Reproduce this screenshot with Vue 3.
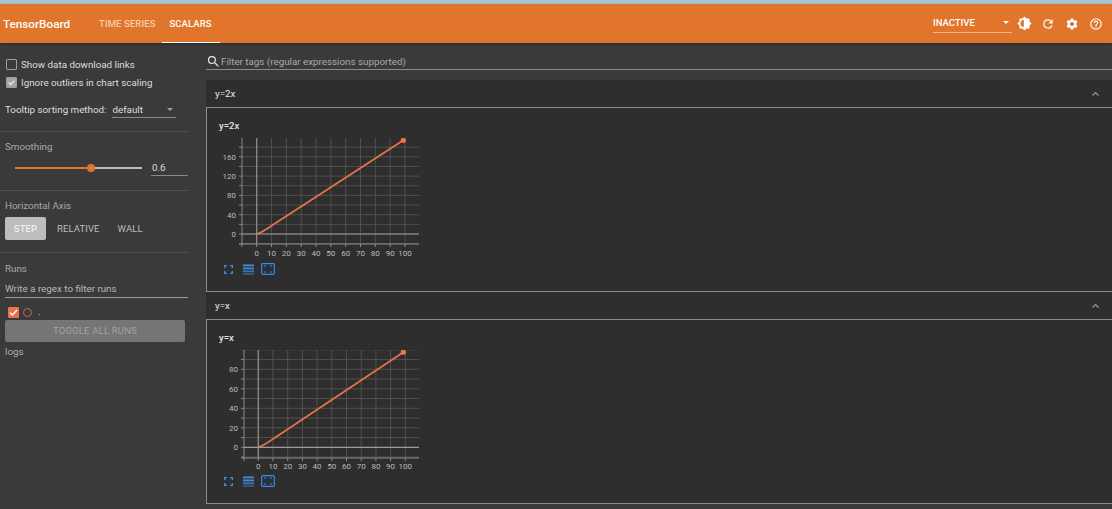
<script setup>
const nav = ['TIME SERIES', 'SCALARS']
function range(a, b, s) { const o = []; for (let v = a; v <= b; v += s) o.push(v); return o }
const xs = range(0, 100, 10)
const charts = [
  { tag: 'y=2x', head: 'y=2x', left: 37, right: 214, top: 0, bottom: 106, x0: 51.7, x100: 200, y0: 96, yStep: 0.4825, yMax: 180, yMin: -20, ticks: [0, 40, 80, 120, 160], end: [198.3, 2.3], lab: 12 },
  { tag: 'y=x', head: 'y=x', left: 39, right: 214, top: 0, bottom: 108, x0: 53.3, x100: 200.3, y0: 97.3, yStep: 0.975, yMax: 90, yMin: -10, ticks: [0, 20, 40, 60, 80], end: [198.3, 2.2], lab: 11 }
]
function px(c, v) { return c.x0 + (c.x100 - c.x0) * v / 100 }
function py(c, v) { return c.y0 - c.yStep * v }
function minors(c) { const s = c.ticks[1] / 2; return range(c.yMin, c.yMax + s, s).filter(v => py(c, v) >= c.top - 1) }
function line(c) { const t = c.y0 - c.end[1]; return `M${px(c, 0)} ${c.y0} Q${px(c, 4)} ${c.y0 - 0.02 * t} ${px(c, 10)} ${c.y0 - 0.088 * t} L${c.end[0]} ${c.end[1]}` }
</script>

<template>
  <div class="page">
    <div class="strip"></div>
    <header class="toolbar">
      <span class="brand">TensorBoard</span>
      <nav class="tabs">
        <span v-for="(n, i) in nav" :key="n" class="tab" :class="{ active: i === 1 }">{{ n }}</span>
      </nav>
      <div class="tools">
        <div class="inactive"><span>INACTIVE</span><i class="caret white"></i></div>
        <svg class="ticon theme" viewBox="0 0 24 24"><path fill="#fff" d="M20 8.690V4h-4.690L12 .69 8.690 4H4v4.690L.69 12 4 15.310V20h4.690L12 23.310 15.310 20H20v-4.690L23.310 12z"/><path fill="#e0752b" d="M11 6.500a5.500 5.500 0 0 0 0 11z"/></svg>
        <svg class="ticon" viewBox="0 0 24 24"><path fill="#fff" d="M17.650 6.350A7.960 7.960 0 0 0 12 4a8 8 0 1 0 7.730 10h-2.080A6 6 0 1 1 12 6c1.660 0 3.140.69 4.220 1.780L13 11h7V4l-2.350 2.350z"/></svg>
        <svg class="ticon" viewBox="0 0 24 24"><path fill="#fff" d="M19.140 12.940c.04-.3.06-.61.06-.94 0-.32-.02-.64-.07-.94l2.030-1.580a.49.49 0 0 0 .12-.61l-1.920-3.320a.49.49 0 0 0-.59-.22l-2.390.96a7 7 0 0 0-1.620-.94l-.36-2.540a.48.48 0 0 0-.48-.41h-3.840a.47.47 0 0 0-.47.41l-.36 2.540c-.59.24-1.130.57-1.620.94l-2.390-.96a.49.49 0 0 0-.59.22L2.740 8.870a.47.47 0 0 0 .12.61l2.030 1.580c-.05.3-.09.63-.09.94s.02.64.07.94l-2.030 1.580a.49.49 0 0 0-.12.61l1.920 3.320c.12.22.37.29.59.22l2.390-.96c.5.38 1.030.7 1.620.94l.36 2.540c.05.24.24.41.48.41h3.840c.24 0 .44-.17.47-.41l.36-2.540a7 7 0 0 0 1.620-.94l2.390.96c.22.08.47 0 .59-.22l1.920-3.320a.47.47 0 0 0-.12-.61l-2.010-1.580zM12 15.600a3.600 3.600 0 1 1 0-7.200 3.600 3.600 0 0 1 0 7.200z"/></svg>
        <svg class="ticon" viewBox="0 0 24 24"><path fill="#fff" d="M11 18h2v-2h-2v2zm1-16a10 10 0 1 0 0 20 10 10 0 0 0 0-20zm0 18a8 8 0 1 1 0-16 8 8 0 0 1 0 16zm0-14a4 4 0 0 0-4 4h2a2 2 0 1 1 4 0c0 2-3 1.750-3 5h2c0-2.250 3-2.500 3-5a4 4 0 0 0-4-4z"/></svg>
      </div>
    </header>

    <div class="body">
      <aside class="side">
        <section class="sec first">
          <label class="check"><span class="box"></span>Show data download links</label>
          <label class="check"><span class="box on"><svg viewBox="0 0 12 12"><path d="M2.200 6.200l2.600 2.600 5-5.400" fill="none" stroke="#eeeeee" stroke-width="1.600"/></svg></span>Ignore outliers in chart scaling</label>
          <div class="sort">
            <span>Tooltip sorting method:</span>
            <div class="select"><span>default</span><i class="caret"></i></div>
          </div>
        </section>
        <section class="sec smooth">
          <h4>Smoothing</h4>
          <div class="sliderrow">
            <div class="slider"><i class="fill"></i><i class="thumb"></i></div>
            <div class="val">0.6</div>
          </div>
        </section>
        <section class="sec axis">
          <h4>Horizontal Axis</h4>
          <div class="btns">
            <span class="btn sel">STEP</span><span class="btn">RELATIVE</span><span class="btn">WALL</span>
          </div>
        </section>
        <section class="sec runs">
          <h4>Runs</h4>
          <div class="regex">Write a regex to filter runs</div>
          <div class="runrow">
            <span class="runbox"><svg viewBox="0 0 12 12"><path d="M2.200 6.200l2.600 2.600 5-5.400" fill="none" stroke="#fff" stroke-width="1.600"/></svg></span>
            <span class="circle"></span><span class="dot">.</span>
          </div>
          <div class="toggle">TOGGLE ALL RUNS</div>
          <div class="logs">logs</div>
        </section>
      </aside>

      <main class="main">
        <div class="filter">
          <svg class="search" viewBox="0 0 24 24"><path fill="#e6e6e6" d="M15.500 14h-.79l-.28-.27A6.470 6.470 0 0 0 16 9.500 6.500 6.500 0 1 0 9.500 16c1.610 0 3.090-.59 4.230-1.570l.27.28v.79l5 4.990L20.490 19l-4.990-5zm-6 0a4.500 4.500 0 1 1 0-9 4.500 4.500 0 0 1 0 9z"/></svg>
          <span>Filter tags (regular expressions supported)</span>
        </div>
        <section v-for="c in charts" :key="c.tag" class="group">
          <div class="ghead">
            <span>{{ c.tag }}</span>
            <svg class="chev" viewBox="0 0 12 8"><path d="M2 6l4-4 4 4" fill="none" stroke="#9a9a9a" stroke-width="1.500"/></svg>
          </div>
          <div class="card">
            <div class="ctitle">{{ c.head }}</div>
            <svg class="plot" width="214" height="125" viewBox="0 0 214 125">
              <g stroke="#505050" stroke-width="1">
                <line v-for="v in xs" :key="'gx' + v" :x1="px(c, v)" :y1="c.top" :x2="px(c, v)" :y2="c.bottom" />
                <line v-for="v in minors(c)" :key="'gy' + v" :x1="c.left" :y1="py(c, v)" :x2="c.right" :y2="py(c, v)" />
              </g>
              <line :x1="c.left" :y1="c.top" :x2="c.left" :y2="c.bottom + 3" stroke="#8a8a8a" />
              <line :x1="c.left - 3" :y1="c.bottom" :x2="c.right" :y2="c.bottom" stroke="#8a8a8a" />
              <line :x1="c.x0" :y1="c.top" :x2="c.x0" :y2="c.bottom" stroke="#8e8e8e" stroke-width="1.200" />
              <line :x1="c.left" :y1="c.y0" :x2="c.right" :y2="c.y0" stroke="#9a9a9a" stroke-width="1.200" />
              <g stroke="#8a8a8a">
                <line v-for="v in xs" :key="'tx' + v" :x1="px(c, v)" :y1="c.bottom" :x2="px(c, v)" :y2="c.bottom + 3" />
                <line v-for="v in minors(c)" :key="'ty' + v" :x1="c.left - 3" :y1="py(c, v)" :x2="c.left" :y2="py(c, v)" />
              </g>
              <g class="axis-text">
                <text v-for="v in xs" :key="'lx' + v" :x="px(c, v)" :y="c.bottom + c.lab" text-anchor="middle">{{ v }}</text>
                <text v-for="v in c.ticks" :key="'ly' + v" :x="c.left - 6" :y="py(c, v) + 3" text-anchor="end">{{ v }}</text>
              </g>
              <path :d="line(c)" fill="none" stroke="#e8744a" stroke-width="1.700" />
              <circle :cx="c.end[0]" :cy="c.end[1]" r="2.600" fill="#f0734a" />
            </svg>
            <div class="icons">
              <svg width="9" height="9" viewBox="0 0 11 11"><path d="M.8 3.600V.8h2.800M7.400.8h2.800v2.800M10.200 7.400v2.800H7.400M3.600 10.200H.8V7.400" fill="none" stroke="#3f8be0" stroke-width="1.700"/></svg>
              <svg width="11" height="11" viewBox="0 0 12 12"><g fill="#3f8be0"><rect y="0.500" width="12" height="2"/><rect y="3.800" width="12" height="2"/><rect y="7" width="12" height="2" opacity=".75"/><rect y="10" width="12" height="1.800" opacity=".5"/></g></svg>
              <svg width="14" height="12" viewBox="0 0 14 12"><rect x=".7" y=".7" width="12.600" height="10.600" rx="1" fill="#262f3a" stroke="#3f8be0" stroke-width="1.200"/><path d="M3 3h2M9 3h2M3 9h2M9 9h2" stroke="#3f8be0" stroke-width="1"/></svg>
            </div>
          </div>
        </section>
      </main>
    </div>
  </div>
</template>

<style>
html, body { margin: 0; background: #3a3a3a; overflow: hidden; }
</style>

<style scoped>
.page { width: 1112px; height: 509px; overflow: hidden; background: #3a3a3a; font-family: Roboto, "Liberation Sans", sans-serif; color: #dcdcdc; font-size: 9.8px; display: flex; flex-direction: column; opacity: .999; }
.strip { height: 4px; background: #a9c4d8; flex: none; }
.toolbar { height: 39px; flex: none; background: #e0752b; display: flex; align-items: center; color: #fff; box-shadow: 0 1px 2px #2a2a2a; position: relative; padding-left: 3px; }
.brand { font-size: 11.7px; font-weight: 500; width: 88px; }
.tabs { display: flex; height: 100%; }
.tab { font-size: 9.5px; font-weight: 500; letter-spacing: .1px; color: #f5cfae; display: flex; align-items: center; padding: 0 8px; height: 100%; box-sizing: border-box; margin-right: -2px; }
.tab.active { color: #fff; border-bottom: 1px solid #fff; padding-top: 1px; width: 58px; justify-content: center; margin-left: 0; }
.tools { margin-left: auto; display: flex; align-items: center; padding-right: 9px; }
.inactive { width: 79px; height: 19px; border-bottom: 1px solid #f3b98c; display: flex; align-items: center; justify-content: space-between; font-size: 9.5px; font-weight: 500; padding-bottom: 2px; box-sizing: border-box; margin-right: 5px; }
.caret { width: 0; height: 0; border-left: 3px solid transparent; border-right: 3px solid transparent; border-top: 3px solid #9f9f9f; margin-right: 3px; }
.caret.white { border-top-color: #fff; }
.ticon { width: 14px; height: 14px; margin-left: 10px; }
.ticon.theme { width: 15px; height: 15px; margin-left: 0; margin-right: -1px; }
.body { flex: 1; display: flex; min-height: 0; }
.side { width: 188px; flex: none; margin-right: 18px; }
.sec { border-bottom: 1px solid #4e4e4e; box-sizing: border-box; padding-left: 5px; }
.first { height: 89px; padding-top: 12px; }
.check { display: flex; align-items: center; height: 18px; color: #dedede; }
.box { width: 9px; height: 9px; border: 1px solid #9c9c9c; border-radius: 1px; margin-right: 4px; margin-left: 1px; display: block; flex: none; }
.box.on { background: #a4a4a4; }
.box svg { display: block; width: 9px; height: 9px; }
.sort { display: flex; align-items: center; margin-top: 10px; color: #dedede; }
.select { width: 64px; height: 17px; margin-left: 6px; border-bottom: 1px solid #8a8a8a; display: flex; align-items: center; justify-content: space-between; box-sizing: border-box; }
h4 { font-weight: 400; font-size: 9.8px; color: #a8a8a8; margin: 0; }
.smooth { height: 59px; padding-top: 9px; }
.sliderrow { display: flex; align-items: center; margin-top: 7px; }
.slider { width: 127px; margin-left: 10px; height: 2px; background: #bdbdbd; position: relative; }
.fill { position: absolute; left: 0; top: 0; height: 100%; width: 76px; background: #e0752b; }
.thumb { position: absolute; left: 72px; top: -3px; width: 8px; height: 8px; border-radius: 50%; background: #e0752b; }
.val { width: 37px; margin-left: 9px; border-bottom: 1px solid #8a8a8a; height: 17px; line-height: 17px; box-sizing: border-box; padding-left: 1px; }
.axis { height: 62px; padding-top: 9px; }
.btns { display: flex; margin-top: 6px; }
.btn { height: 23px; line-height: 23px; font-size: 9.5px; font-weight: 400; color: #bcbcbc; padding: 0 9px; letter-spacing: .1px; }
.btn.sel { background: #bdbdbd; color: #eee; border-radius: 2px; width: 41px; box-sizing: border-box; padding: 0; text-align: center; font-weight: 500; margin-right: 2px; }
.runs { border-bottom: 0; padding-top: 10px; }
.regex { width: 183px; height: 21px; margin-top: 3px; border-bottom: 1px solid #9a9a9a; color: #b8b8b8; line-height: 19px; box-sizing: border-box; padding-top: 2px; }
.runrow { display: flex; align-items: center; padding: 6px 0 0 3px; height: 16px; }
.runbox { width: 11px; height: 11px; background: #e8744a; border-radius: 1px; display: block; }
.runbox svg { display: block; width: 11px; height: 11px; }
.circle { width: 7px; height: 7px; border: 1.300px solid #c96a45; border-radius: 50%; margin-left: 4px; }
.dot { margin-left: 6px; line-height: 8px; }
.toggle { width: 180px; height: 22px; line-height: 22px; text-align: center; background: #757575; border-radius: 2px; color: #a4a4a4; font-size: 9.5px; letter-spacing: .2px; }
.logs { color: #b0b0b0; margin-top: 4px; }
.main { flex: 1; min-width: 0; }
.filter { height: 27px; box-sizing: border-box; border-bottom: 1px solid #8a8a8a; display: flex; align-items: center; color: #a9a9a9; padding-top: 10px; }
.search { width: 15px; height: 15px; flex: none; }
.group { margin-top: 10px; }
.group + .group { margin-top: 0; }
.ghead { height: 27px; background: #2e2e2e; display: flex; align-items: center; justify-content: space-between; padding: 0 12px 0 9px; box-sizing: border-box; color: #e6e6e6; }
.chev { width: 9px; height: 6px; }
.card { background: #2e2e2e; border: 1px solid #8c8c8c; border-width: 1px 0 1px 1px; height: 185px; box-sizing: border-box; padding: 12px 0 0 12px; }
.ctitle { color: #e4e4e4; font-weight: 500; font-size: 9.5px; height: 12px; line-height: 12px; }
.plot { display: block; margin: 6px 0 0 -14px; }
.axis-text text { fill: #bcbcbc; font-size: 8px; font-family: Roboto, "Liberation Sans", sans-serif; }
.icons { display: flex; align-items: center; margin: 0 0 0 5px; }
.icons svg:nth-child(2) { margin-left: 10px; }
.icons svg:nth-child(3) { margin-left: 7px; }
</style>
